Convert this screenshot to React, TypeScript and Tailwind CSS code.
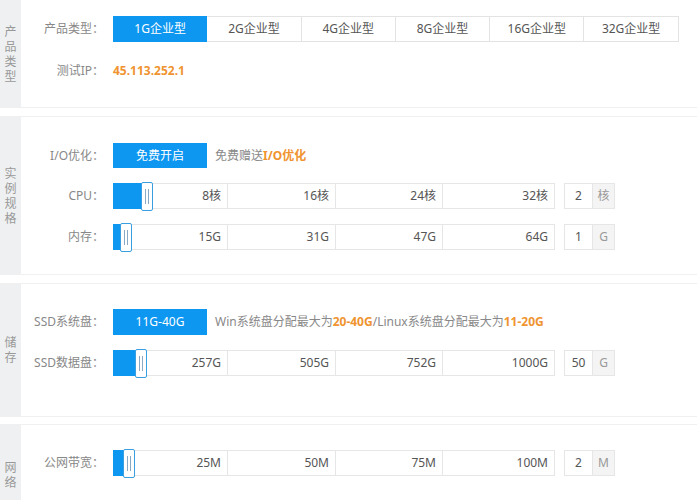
import React from "react";

const font = { fontFamily: '"Noto Sans", "Noto Sans CJK SC", sans-serif' };

const SideTitle = ({ text }: { text: string }) => (
    <div className="w-[21px] shrink-0 bg-[#eef0f1] flex flex-col items-center justify-center text-[12px] text-[#999]">
        {text.split("").map((c, i) => (
            <span key={i} className="block h-[15px] leading-[15px]">{c}</span>
        ))}
    </div>
)

const Label = ({ text }: { text: string }) => (
    <div className="w-[84px] shrink-0 text-right pr-[1px] text-[12px] text-[#888]">{text}</div>
)

const segWidths = [114, 108, 107, 112]

const Slider = ({ marks, fill, value, unit }: { marks: string[]; fill: number; value: string; unit: string }) => (
    <div className="flex items-center">
        <div className="relative flex h-[26px] border border-[#e6e6e6] bg-white">
            {marks.map((m, i) => (
                <div
                    key={m}
                    style={{ width: segWidths[i] - (i === 0 ? 1 : 0) }}
                    className={"flex items-center justify-end pr-[6px] text-[12px] text-[#555] " + (i > 0 ? "border-l border-[#e6e6e6]" : "")}
                >
                    {m}
                </div>
            ))}
            <div className="absolute left-[-1px] top-[-1px] h-[26px] bg-[#0e97f0]" style={{ width: fill }} />
            <div
                className="absolute top-[-2px] h-[29px] w-[12px] rounded-[2px] border border-[#3a9fe0] bg-white flex items-center justify-center gap-[2px]"
                style={{ left: fill - 2 }}
            >
                <span className="w-px h-[15px] bg-[#8aa9c4]" />
                <span className="w-px h-[15px] bg-[#8aa9c4]" />
            </div>
        </div>
        <div className="ml-[9px] flex h-[26px] border border-[#e6e6e6] text-[12px]">
            <div className="w-[27px] flex items-center justify-center text-[#555]">{value}</div>
            <div className="w-[22px] flex items-center justify-center bg-[#f4f4f4] border-l border-[#e6e6e6] text-[#999]">{unit}</div>
        </div>
    </div>
)

const types = ["1G企业型", "2G企业型", "4G企业型", "8G企业型", "16G企业型", "32G企业型"]

export default function App() {
    return (
        <div className="w-[697px] h-[500px] overflow-hidden bg-white" style={font}>
            {/* 产品类型 */}
            <div className="flex h-[108px] border-b border-[#f0f0f0]">
                <SideTitle text="产品类型" />
                <div className="flex-1 pt-[16px]">
                    <div className="flex items-center gap-[8px]">
                        <Label text="产品类型：" />
                        <div className="flex">
                            {types.map((t, i) => (
                                <div
                                    key={t}
                                    className={
                                        "w-[94.3px] h-[26px] flex items-center justify-center text-[12px] border-y " +
                                        (i === 0
                                            ? "bg-[#0e97f0] border-[#0e97f0] text-white"
                                            : "border-r border-[#e3e3e3] text-[#555]")
                                    }
                                >
                                    {t}
                                </div>
                            ))}
                        </div>
                    </div>
                    <div className="flex items-center gap-[8px] mt-[16px] h-[26px]">
                        <Label text="测试IP：" />
                        <span className="text-[12px] font-bold text-[#ef9430]">45.113.252.1</span>
                    </div>
                </div>
            </div>

            {/* 实例规格 */}
            <div className="flex h-[159px] mt-[8px] border-y border-[#f0f0f0]">
                <SideTitle text="实例规格" />
                <div className="flex-1 pt-[26px] flex flex-col gap-[15px]">
                    <div className="flex items-center gap-[8px]">
                        <Label text="I/O优化：" />
                        <div className="w-[94px] h-[25px] bg-[#0e97f0] text-white text-[12px] flex items-center justify-center">免费开启</div>
                        <span className="text-[12px] text-[#888]">
                            免费赠送<b className="text-[#ef9430]">I/O优化</b>
                        </span>
                    </div>
                    <div className="flex items-center gap-[8px]">
                        <Label text="CPU：" />
                        <Slider marks={["8核", "16核", "24核", "32核"]} fill={29} value="2" unit="核" />
                    </div>
                    <div className="flex items-center gap-[8px]">
                        <Label text="内存：" />
                        <Slider marks={["15G", "31G", "47G", "64G"]} fill={8} value="1" unit="G" />
                    </div>
                </div>
            </div>

            {/* 储存 */}
            <div className="flex h-[134px] mt-[8px] border-y border-[#f0f0f0]">
                <SideTitle text="储存" />
                <div className="flex-1 pt-[25px] flex flex-col gap-[15px]">
                    <div className="flex items-center gap-[8px]">
                        <Label text="SSD系统盘：" />
                        <div className="w-[94px] h-[26px] bg-[#0e97f0] text-white text-[12px] flex items-center justify-center">11G-40G</div>
                        <span className="text-[12px] text-[#888]">
                            Win系统盘分配最大为<b className="text-[#ef9430]">20-40G</b>/Linux系统盘分配最大为<b className="text-[#ef9430]">11-20G</b>
                        </span>
                    </div>
                    <div className="flex items-center gap-[8px]">
                        <Label text="SSD数据盘：" />
                        <Slider marks={["257G", "505G", "752G", "1000G"]} fill={23} value="50" unit="G" />
                    </div>
                </div>
            </div>

            {/* 网络 */}
            <div className="flex h-[100px] mt-[7px] border-t border-[#f0f0f0]">
                <SideTitle text="网络" />
                <div className="flex-1 pt-[25px] self-start">
                    <div className="flex items-center gap-[8px]">
                        <Label text="公网带宽：" />
                        <Slider marks={["25M", "50M", "75M", "100M"]} fill={11} value="2" unit="M" />
                    </div>
                </div>
            </div>
        </div>
    )
}
